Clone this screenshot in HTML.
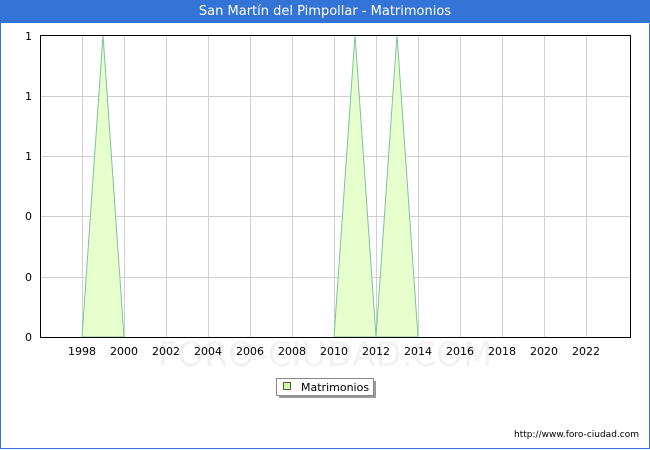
<!DOCTYPE html>
<html><head><meta charset="utf-8"><style>
body{margin:0;width:650px;height:450px;overflow:hidden;background:#fff;font-family:"DejaVu Sans","Liberation Sans",sans-serif;}
.frame{position:absolute;left:0;top:0;width:648px;height:448px;border:1px solid #3374d6;border-top:none;}
.title{position:absolute;left:0;top:0;width:650px;height:23px;background:#3374d6;color:#fff;font-size:13px;line-height:23px;text-align:center;}
</style></head><body>
<div class="frame"></div>
<div class="title">San Martín del Pimpollar - Matrimonios</div>
<svg width="650" height="450" style="position:absolute;left:0;top:0" font-family="DejaVu Sans, Liberation Sans, sans-serif">
<text x="325" y="366" font-size="34" fill="#f2f2f2" text-anchor="middle">FORO-CIUDAD.COM</text>
<g stroke="#d0d0d0" stroke-width="1">
<line x1="40" y1="96.5" x2="630" y2="96.5"/><line x1="40" y1="156.5" x2="630" y2="156.5"/><line x1="40" y1="216.5" x2="630" y2="216.5"/><line x1="40" y1="277.5" x2="630" y2="277.5"/>
<line x1="82.5" y1="35" x2="82.5" y2="337"/><line x1="124.5" y1="35" x2="124.5" y2="337"/><line x1="166.5" y1="35" x2="166.5" y2="337"/><line x1="208.5" y1="35" x2="208.5" y2="337"/><line x1="250.5" y1="35" x2="250.5" y2="337"/><line x1="292.5" y1="35" x2="292.5" y2="337"/><line x1="334.5" y1="35" x2="334.5" y2="337"/><line x1="376.5" y1="35" x2="376.5" y2="337"/><line x1="418.5" y1="35" x2="418.5" y2="337"/><line x1="460.5" y1="35" x2="460.5" y2="337"/><line x1="502.5" y1="35" x2="502.5" y2="337"/><line x1="544.5" y1="35" x2="544.5" y2="337"/><line x1="586.5" y1="35" x2="586.5" y2="337"/>
</g>
<g fill="#e6ffcc" stroke="#7cc49a" stroke-width="1">
<polygon points="82,337 103,35 124,337"/>
<polygon points="334,337 355,35 376,337"/>
<polygon points="376,337 397,35 418,337"/>
</g>
<rect x="40.5" y="35.5" width="590" height="302" fill="none" stroke="#000" stroke-width="1"/>
<g font-size="11" fill="#000" text-anchor="end">
<text x="32" y="40">1</text><text x="32" y="100">1</text><text x="32" y="160">1</text><text x="32" y="220">0</text><text x="32" y="281">0</text><text x="32" y="341">0</text>
</g>
<g font-size="11" fill="#000" text-anchor="middle">
<text x="82" y="355">1998</text><text x="124" y="355">2000</text><text x="166" y="355">2002</text><text x="208" y="355">2004</text><text x="250" y="355">2006</text><text x="292" y="355">2008</text><text x="334" y="355">2010</text><text x="376" y="355">2012</text><text x="418" y="355">2014</text><text x="460" y="355">2016</text><text x="502" y="355">2018</text><text x="544" y="355">2020</text><text x="586" y="355">2022</text>
</g>
<rect x="279" y="381" width="97" height="17" fill="#999"/>
<rect x="276.5" y="378.5" width="97" height="17" fill="#fff" stroke="#888"/>
<rect x="283.5" y="382.5" width="7" height="7" fill="#ccff99" stroke="#555"/>
<text x="301" y="391" font-size="11" fill="#000">Matrimonios</text>
<text x="639" y="437" font-size="9" fill="#000" text-anchor="end">http://www.foro-ciudad.com</text>
</svg>
</body></html>
